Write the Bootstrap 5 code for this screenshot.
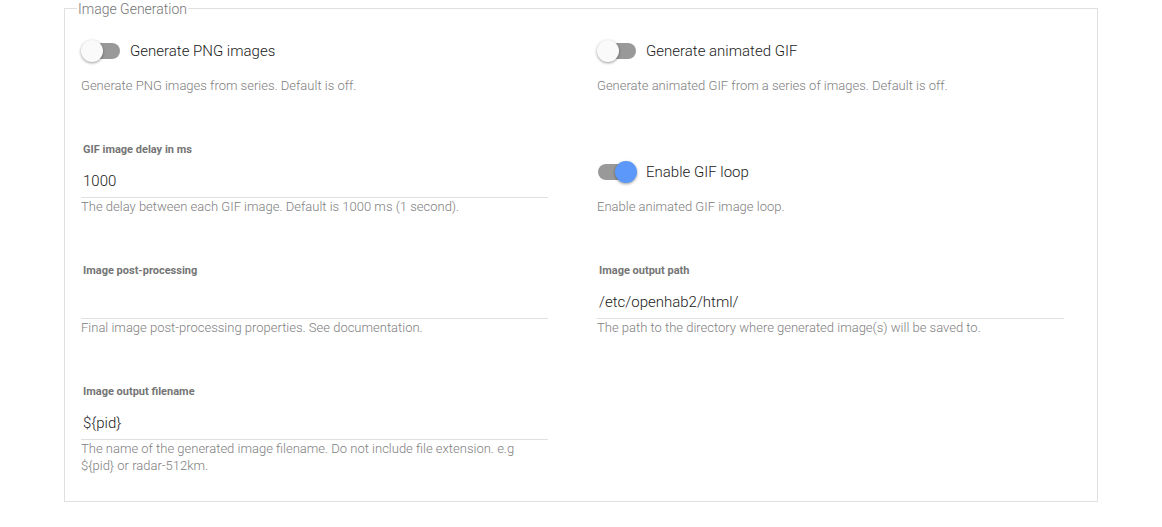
<!DOCTYPE html>
<html lang="en">
<head>
<meta charset="utf-8">
<meta name="viewport" content="width=device-width, initial-scale=1">
<title>Image Generation</title>
<link href="https://cdn.jsdelivr.net/npm/bootstrap@5.3.0/dist/css/bootstrap.min.css" rel="stylesheet">
<style>
body{font-family:Roboto,"Liberation Sans",sans-serif;font-weight:300;color:#212121;background:#fff}
.page-wrap{padding:0 64px}
.group{border:1px solid #e0e0e0}
.group legend{float:none;width:auto;margin:0 0 0 12px;padding:1px 1px 0;font-size:14px;line-height:16px;color:#757575}
.cell{min-height:121px;padding:0 33px 0 16px}
.setting{height:20px;font-size:15px;line-height:20px;gap:10px;margin-top:24px}
.hint{font-size:13px;line-height:17px;color:#808080;margin:0}
.setting+.hint{margin-top:16px}
.toggle{appearance:none;width:38px;height:16px;border-radius:8px;background:#999;margin:0 0 0 1px;flex:none;position:relative}
.toggle::before{content:"";position:absolute;left:-1px;top:-3px;width:22px;height:22px;border-radius:50%;background:#fafafa;box-shadow:0 1px 3px rgba(0,0,0,.4)}
.toggle:checked::before{left:17px;background:#5c98fa}
.field-label{display:block;font-size:11px;line-height:16px;font-weight:700;color:#757575;padding-left:2px;margin-top:4px}
.field-input{display:block;width:100%;height:40px;border:0;border-bottom:1px solid #e0e0e0;background:none;padding:7px 2px 0;font-size:15px;font-weight:300;color:#212121;outline:0}
.field-input:focus{border-bottom-color:#5c98fa}
</style>
</head>
<body>
<main class="page-wrap">
<fieldset class="group">
<legend>Image Generation</legend>
<div class="row g-0">
<div class="col-6 cell"><div class="setting d-flex align-items-center"><input class="toggle" type="checkbox" role="switch" id="png"><label for="png">Generate PNG images</label></div><p class="hint">Generate PNG images from series. Default is off.</p></div>
<div class="col-6 cell"><div class="setting d-flex align-items-center"><input class="toggle" type="checkbox" role="switch" id="gif"><label for="gif">Generate animated GIF</label></div><p class="hint">Generate animated GIF from a series of images. Default is off.</p></div>
<div class="col-6 cell"><label class="field-label" for="delay">GIF image delay in ms</label><input class="field-input" type="text" id="delay" value="1000"><p class="hint">The delay between each GIF image. Default is 1000 ms (1 second).</p></div>
<div class="col-6 cell"><div class="setting d-flex align-items-center"><input class="toggle" type="checkbox" role="switch" id="loop" checked><label for="loop">Enable GIF loop</label></div><p class="hint">Enable animated GIF image loop.</p></div>
<div class="col-6 cell"><label class="field-label" for="post">Image post-processing</label><input class="field-input" type="text" id="post"><p class="hint">Final image post-processing properties. See documentation.</p></div>
<div class="col-6 cell"><label class="field-label" for="path">Image output path</label><input class="field-input" type="text" id="path" value="/etc/openhab2/html/"><p class="hint">The path to the directory where generated image(s) will be saved to.</p></div>
<div class="col-6 cell"><label class="field-label" for="file">Image output filename</label><input class="field-input" type="text" id="file" value="${pid}"><p class="hint">The name of the generated image filename. Do not include file extension. e.g ${pid} or radar-512km.</p></div>
</div>
</fieldset>
</main>
<script src="https://cdn.jsdelivr.net/npm/bootstrap@5.3.0/dist/js/bootstrap.bundle.min.js"></script>
</body>
</html>
